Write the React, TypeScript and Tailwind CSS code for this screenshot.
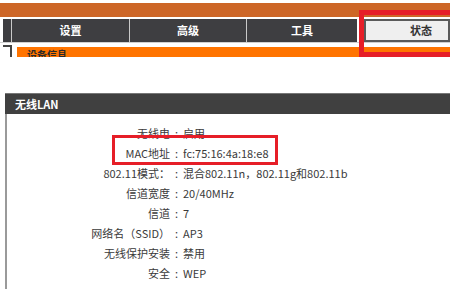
const font = { fontFamily: '"Noto Sans CJK SC", "Noto Sans", sans-serif' };

const rows: [string, string][] = [
  ["无线电", "启用"],
  ["MAC地址", "fc:75:16:4a:18:e8"],
  ["802.11模式：", "混合802.11n，802.11g和802.11b"],
  ["信道宽度", "20/40MHz"],
  ["信道", "7"],
  ["网络名（SSID）", "AP3"],
  ["无线保护安装", "禁用"],
  ["安全", "WEP"],
];

function Tab({ label, w }: { label: string; w: string }) {
  return (
    <div
      className={`${w} h-full bg-[#3e3e41] border-r border-[#c9c9c9] flex items-center justify-center text-[11px] font-bold text-white`}
    >
      {label}
    </div>
  );
}

export default function App() {
  return (
    <div className="relative w-[450px] h-[295px] overflow-hidden bg-white" style={font}>
      <div className="h-[3px]" />
      <div className="h-[14px] bg-[#cd6627]" />
      <div className="h-[2px]" />

      {/* tab row */}
      <div className="flex h-[24px] border-b border-[#d0d0d0]">
        <div className="w-[3px]" />
        <div className="w-[9px] h-full bg-[#3e3e41] border-r border-[#c9c9c9]" />
        <Tab label="设置" w="w-[118px]" />
        <Tab label="高级" w="w-[117px]" />
        <div className="w-[110px] h-full bg-[#3e3e41] flex items-center justify-center text-[11px] font-bold text-white">
          工具
        </div>
        <div className="w-[7px]" />
        <div className="flex-1 h-full bg-[#efefef] border-2 border-[#5a5a5a] flex items-center pl-[44px] text-[11px] font-bold text-[#333]">
          状态
        </div>
      </div>

      {/* sub row */}
      <div className="flex mt-[2px] h-[12px]">
        <div className="w-[3px]" />
        <div className="w-[9px] h-full border-t-2 border-r-2 border-[#444]" />
        <div className="w-[5px]" />
        <div className="flex-1 mt-[2px] h-[10px] bg-[#ff7400] overflow-hidden pl-[10px]">
          <div className="text-[10px] font-bold leading-[16px] text-[#2a2a2a]">设备信息</div>
        </div>
      </div>

      {/* wireless panel */}
      <div className="ml-[5px] mt-[36px]">
        <div className="h-[21px] bg-[#404040] border-t border-[#777] flex items-center pl-[10px] text-[11px] font-bold text-white">
          无线LAN
        </div>
        <div className="border-l-2 border-[#9a9a9a] pt-[9px] h-[175px]">
          {rows.map(([k, v]) => (
            <div key={k} className="flex h-[20px] items-center text-[11px] text-[#3a3a3a]">
              <div className="w-[163px] text-right whitespace-nowrap">{k}</div>
              <div className="w-[13px] text-center">:</div>
              <div className="whitespace-nowrap">{v}</div>
            </div>
          ))}
        </div>
      </div>

      {/* highlight boxes */}
      <div className="absolute left-[359px] top-[10px] w-[110px] h-[47px] border-[5px] border-[#e61e28]" />
      <div className="absolute left-[112px] top-[135px] w-[166px] h-[30px] border-[3px] border-[#e61e28]" />
    </div>
  );
}
